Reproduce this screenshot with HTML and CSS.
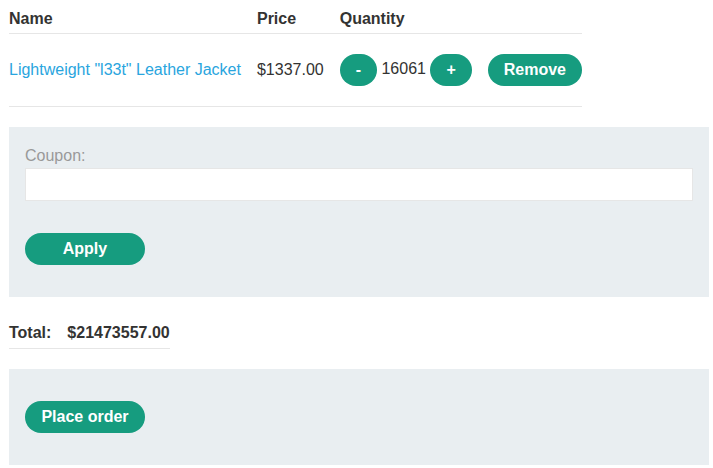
FILE: index.html
```html
<!DOCTYPE html>
<html>
<head>
<meta charset="utf-8">
<link rel="stylesheet" href="styles.css">
</head>
<body>
<div class="page">
  <table class="cart">
    <thead>
      <tr>
        <th>Name</th>
        <th>Price</th>
        <th>Quantity</th>
        <th></th>
      </tr>
    </thead>
    <tbody>
      <tr>
        <td><a class="link" href="#">Lightweight "l33t" Leather Jacket</a></td>
        <td>$1337.00</td>
        <td><button class="btn">-</button> 16061 <button class="btn">+</button></td>
        <td><button class="btn">Remove</button></td>
      </tr>
    </tbody>
  </table>

  <form class="panel coupon">
    <label class="label" for="coupon">Coupon:</label>
    <input class="input" id="coupon" type="text">
    <button class="btn btn-wide" type="button">Apply</button>
  </form>

  <table class="total">
    <tbody>
      <tr>
        <th>Total:</th>
        <th>$21473557.00</th>
      </tr>
    </tbody>
  </table>

  <form class="panel order">
    <button class="btn btn-wide" type="button">Place order</button>
  </form>
</div>
</body>
</html>
```

FILE: styles.css
```css
html, body {
  margin: 0;
  padding: 0;
  background: #fff;
}

body {
  font-family: "Liberation Sans", Arial, sans-serif;
  font-size: 16px;
  color: #333332;
}

.page {
  width: 700px;
  margin-left: 9px;
}

.cart,
.total {
  border-collapse: collapse;
}

.cart th {
  text-align: left;
  font-weight: bold;
  line-height: 18px;
  padding: 10px 16px 5px 0;
  border-bottom: 1px solid #e6e6e6;
  white-space: nowrap;
}

.cart td {
  line-height: 18px;
  padding: 20px 16px 20px 0;
  border-bottom: 1px solid #e6e6e6;
  white-space: nowrap;
  vertical-align: middle;
}

.cart th:last-child,
.cart td:last-child {
  padding-right: 0;
}

.link {
  color: #29a5de;
  text-decoration: none;
}

.btn {
  display: inline-block;
  height: 32px;
  padding: 0 16px;
  border: 0;
  border-radius: 16px;
  background: #169c7f;
  color: #fff;
  font-family: "Liberation Sans", Arial, sans-serif;
  font-size: 16px;
  font-weight: bold;
  line-height: 32px;
  vertical-align: middle;
  cursor: pointer;
}

.btn-wide {
  min-width: 120px;
}

.panel {
  margin: 0;
  background: #e9eef1;
  padding: 16px;
}

.coupon {
  margin-top: 20px;
  display: flex;
  flex-direction: column;
  align-items: flex-start;
  padding-bottom: 32px;
}

.label {
  color: #999;
  line-height: 25px;
}

.input {
  box-sizing: border-box;
  width: 100%;
  height: 33px;
  margin: 0 0 32px 0;
  border: 1px solid #e6e6e6;
  background: #fff;
  font-size: 16px;
  padding: 0 8px;
}

.total {
  margin: 20px 0 20px 0;
}

.total th {
  text-align: left;
  font-weight: bold;
  line-height: 18px;
  padding: 7px 16px 6px 0;
  border-bottom: 1px solid #e6e6e6;
}

.total th:last-child {
  padding-right: 0;
}

.order {
  padding: 32px 16px;
}
```
